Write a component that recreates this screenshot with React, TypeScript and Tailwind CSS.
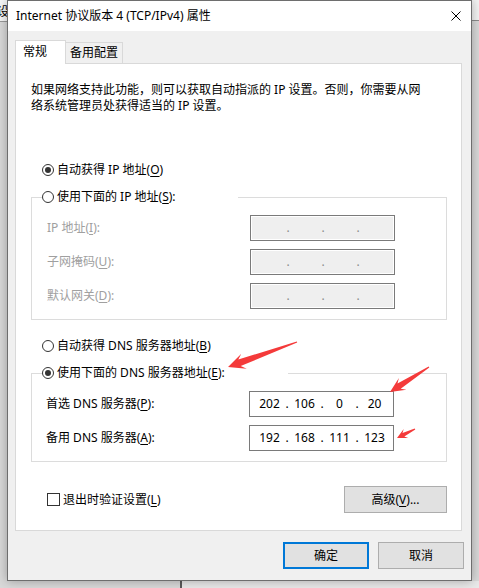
import { Fragment, type ReactNode } from "react";

type Pt = [number, number];

// tapered screenshot-tool style arrow, from tail to tip
function arrowPoints(tail: Pt, tip: Pt, head: number, half: number, neck: number) {
  const dx = tip[0] - tail[0];
  const dy = tip[1] - tail[1];
  const len = Math.hypot(dx, dy);
  const ux = dx / len;
  const uy = dy / len;
  const nx = -uy;
  const ny = ux;
  const bx = tip[0] - ux * head;
  const by = tip[1] - uy * head;
  const kx = tip[0] - ux * head * 0.72;
  const ky = tip[1] - uy * head * 0.72;
  const pts: Pt[] = [
    [tail[0] + nx * 0.6, tail[1] + ny * 0.6],
    [kx + nx * neck, ky + ny * neck],
    [bx + nx * half, by + ny * half],
    tip,
    [bx - nx * half, by - ny * half],
    [kx - nx * neck, ky - ny * neck],
    [tail[0] - nx * 0.6, tail[1] - ny * 0.6],
  ];
  return pts.map((p) => `${p[0].toFixed(1)},${p[1].toFixed(1)}`).join(" ");
}

const Key = ({ k }: { k: string }) => <span className="underline underline-offset-[2px]">{k}</span>;

function Radio({ checked, children }: { checked?: boolean; children: ReactNode }) {
  return (
    <div className="flex items-center h-[16px] gap-[3px] leading-[16px]">
      <span className="w-[12px] h-[12px] rounded-full border border-[#333333] bg-white flex items-center justify-center">
        {checked && <span className="w-[6px] h-[6px] rounded-full bg-[#333333]" />}
      </span>
      <span className="whitespace-nowrap">{children}</span>
    </div>
  );
}

function IpBox({ parts, disabled }: { parts: string[]; disabled?: boolean }) {
  return (
    <div
      className={
        disabled
          ? "w-[145px] h-[26px] border border-[#7a7a7a] bg-[#efefef] shadow-[inset_0_0_0_1px_#ffffff] flex items-center pl-[5px] text-[#8c8c8c]"
          : "w-[145px] h-[26px] border border-[#7a7a7a] bg-white flex items-center pl-[5px] text-black"
      }
    >
      {parts.map((p, i) => (
        <Fragment key={i}>
          {i > 0 && <span className="w-[6px] text-center">.</span>}
          <span className="w-[29px] text-center">{p}</span>
        </Fragment>
      ))}
    </div>
  );
}

function Row({ label, parts, disabled }: { label: ReactNode; parts: string[]; disabled?: boolean }) {
  return (
    <div className="flex items-center h-[26px]">
      <span className={disabled ? "w-[203px] text-[#a0a0a0] whitespace-nowrap" : "w-[203px] text-black whitespace-nowrap"}>
        {label}
      </span>
      <IpBox parts={parts} disabled={disabled} />
    </div>
  );
}

export default function App() {
  return (
    <div className="relative w-[479px] h-[588px] overflow-hidden bg-[#d9d9d9] font-['Noto_Sans','Noto_Sans_CJK_SC',sans-serif] text-[12px] leading-[16px] text-black">
      {/* windows behind the dialog */}
      <div className="absolute left-0 top-0 w-[8px] h-[22px] bg-[#f7f7f7] border-b border-[#9a9a9a] overflow-hidden">
        <span className="absolute left-[-3px] top-[4px] text-[12px] leading-[16px]">设</span>
      </div>
      <div className="absolute right-0 top-0 w-[8px] h-[21px] bg-[#f4f4f4] border-b border-[#8c8c8c]" />
      <div className="absolute left-[180px] top-[581px] w-[2px] h-[7px] bg-[#5a5a5a]" />
      <div className="absolute left-[182px] top-[581px] right-0 h-[7px] bg-[#e9e9e9]" />

      <div className="relative ml-[7px] w-[465px] h-[581px] border border-[#6e6e6e] bg-[#f0f0f0] flex flex-col shadow-[0_0_10px_rgba(0,0,0,0.3)]">
        {/* title bar */}
        <div className="h-[30px] bg-white flex items-center pl-[8px]">
          <span className="whitespace-nowrap">Internet 协议版本 4 (TCP/IPv4) 属性</span>
          <svg className="ml-auto mr-[10px]" width="10" height="10" viewBox="0 0 10 10">
            <path d="M0.5 0.5L9.5 9.5M9.5 0.5L0.5 9.5" stroke="#000" strokeWidth="1" fill="none" />
          </svg>
        </div>

        <div className="flex-1 pl-[7px] pr-[7px] flex flex-col">
          {/* tabs */}
          <div className="mt-[9px] flex items-end">
            <div className="relative z-10 h-[24px] -mb-px w-[51px] bg-white border border-b-0 border-[#d9d9d9] pl-[7px] pt-[3px]">
              常规
            </div>
            <div className="h-[21px] w-[57px] bg-[#f0f0f0] border border-l-0 border-b-0 border-[#d9d9d9] pl-[4px] pt-[2px]">
              备用配置
            </div>
          </div>

          {/* tab panel */}
          <div className="w-[447px] h-[468px] bg-white border border-[#d9d9d9] pl-[15px] pr-[14px] flex flex-col">
            <p className="pt-[18px] leading-[16px]">
              如果网络支持此功能，则可以获取自动指派的 IP 设置。否则，你需要从网
              <br />
              络系统管理员处获得适当的 IP 设置。
            </p>

            <div className="mt-[48px] ml-[11px]">
              <Radio checked>
                自动获得 IP 地址(<Key k="O" />)
              </Radio>
            </div>

            <fieldset className="mt-[11px] border border-[#dcdcdc]">
              <legend className="ml-[10px] w-[196px]">
                <Radio>
                  使用下面的 IP 地址(<Key k="S" />):
                </Radio>
              </legend>
              <div className="pt-[10px] pb-[10px] pl-[15px] flex flex-col gap-[8px]">
                <Row disabled label={<>IP 地址(<Key k="I" />):</>} parts={["", "", "", ""]} />
                <Row disabled label={<>子网掩码(<Key k="U" />):</>} parts={["", "", "", ""]} />
                <Row disabled label={<>默认网关(<Key k="D" />):</>} parts={["", "", "", ""]} />
              </div>
            </fieldset>

            <div className="mt-[18px] ml-[11px]">
              <Radio>
                自动获得 DNS 服务器地址(<Key k="B" />)
              </Radio>
            </div>

            <fieldset className="mt-[11px] border border-[#dcdcdc]">
              <legend className="ml-[10px] w-[246px]">
                <Radio checked>
                  使用下面的 DNS 服务器地址(<Key k="E" />):
                </Radio>
              </legend>
              <div className="pt-[10px] pb-[10px] pl-[14px] flex flex-col gap-[8px]">
                <Row label={<>首选 DNS 服务器(<Key k="P" />):</>} parts={["202", "106", "0", "20"]} />
                <Row label={<>备用 DNS 服务器(<Key k="A" />):</>} parts={["192", "168", "111", "123"]} />
              </div>
            </fieldset>

            <div className="mt-[24px] flex items-center justify-between">
              <div className="ml-[16px] flex items-center gap-[3px]">
                <span className="w-[13px] h-[13px] border border-[#333333] bg-white" />
                <span>
                  退出时验证设置(<Key k="L" />)
                </span>
              </div>
              <div className="w-[103px] h-[27px] bg-[#e1e1e1] border border-[#adadad] flex items-center justify-center">
                高级(<Key k="V" />)...
              </div>
            </div>
          </div>

          {/* dialog buttons */}
          <div className="mt-[11px] flex justify-end gap-[9px]">
            <div className="w-[86px] h-[27px] bg-[#e1e1e1] border-2 border-[#0078d7] flex items-center justify-center">
              确定
            </div>
            <div className="w-[86px] h-[27px] bg-[#e1e1e1] border border-[#adadad] flex items-center justify-center">
              取消
            </div>
          </div>
        </div>
      </div>

      {/* red annotation arrows */}
      <svg className="absolute left-0 top-0 pointer-events-none" width="479" height="588" viewBox="0 0 479 588">
        <polygon points={arrowPoints([297, 342], [228, 367], 17, 8, 3.5)} fill="#f43a3a" />
        <polygon points={arrowPoints([429, 367], [390, 392], 15, 7, 3)} fill="#f43a3a" />
        <polygon points={arrowPoints([415, 429], [397, 438], 10, 5, 2)} fill="#f43a3a" />
      </svg>
    </div>
  );
}
